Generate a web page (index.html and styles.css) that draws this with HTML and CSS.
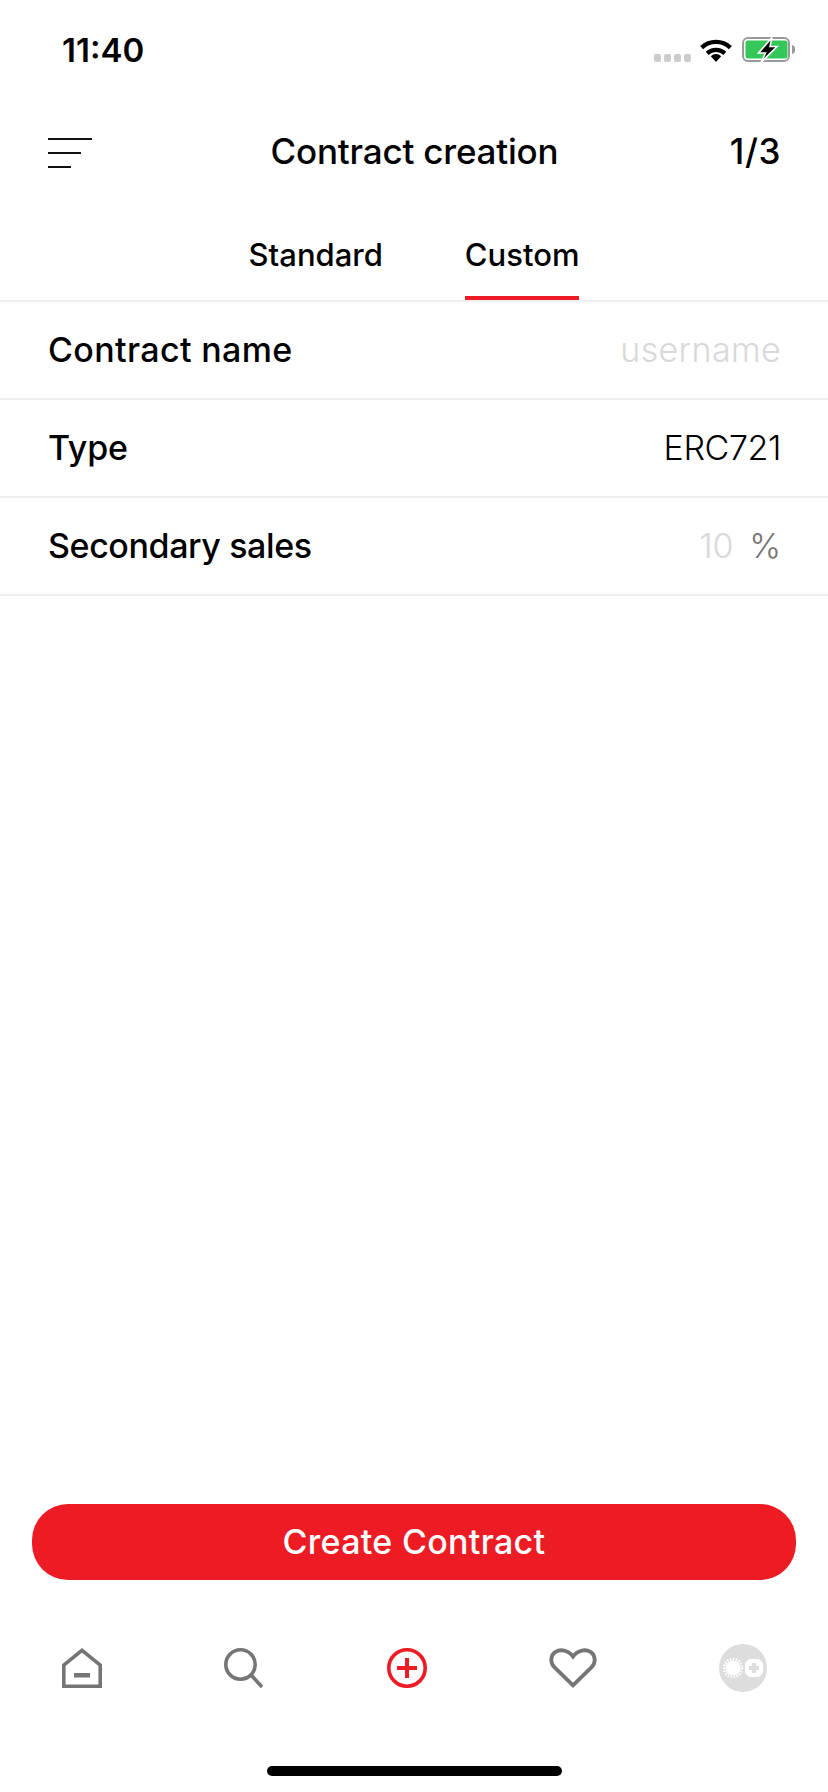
FILE: index.html
```html
<!DOCTYPE html>
<html lang="en">
<head>
<meta charset="utf-8">
<title>Contract creation</title>
<link rel="stylesheet" href="styles.css">
</head>
<body>
<div class="app">
  <div class="status">
    <span class="time">11:40</span>
    <div class="status-icons">
      <div class="dots"><i></i><i></i><i></i><i></i></div>
      <svg class="wifi" width="32" height="24" viewBox="0 0 32 24"><path d="M1.600 9.600A21 21 0 0 1 30.400 9.600" fill="none" stroke="#000" stroke-width="4.400"/><path d="M7.200 15.400A13 13 0 0 1 24.800 15.400" fill="none" stroke="#000" stroke-width="4.200"/><path d="M10.800 18.200A7 7 0 0 1 21.200 18.200L16 24Z" fill="#000"/></svg>
      <svg class="battery" width="53" height="26" viewBox="0 0 53 26"><rect x="1" y="1" width="46" height="23" rx="5" fill="#fff" stroke="#999" stroke-width="2"/><rect x="3.500" y="3.500" width="42" height="18" rx="2.500" fill="#34c759"/><path d="M50 8a4 4 0 0 1 3 4.500a4 4 0 0 1-3 4.500Z" fill="#999"/><path d="M30 .5L16.500 16H23.500L19 25.500L35 9.500H28Z" fill="#000" stroke="#fff" stroke-width="1.600"/></svg>
    </div>
  </div>
  <header class="header">
    <div class="menu"><i class="m1"></i><i class="m2"></i><i class="m3"></i></div>
    <h1 class="title">Contract creation</h1>
    <div class="step">1/3</div>
  </header>
  <nav class="tabs">
    <span class="tab">Standard</span>
    <span class="tab active">Custom</span>
  </nav>
  <div class="row"><span class="label wide">Contract name</span><span class="value ghost wide">username</span></div>
  <div class="row"><span class="label">Type</span><span class="value narrow">ERC721</span></div>
  <div class="row"><span class="label narrow">Secondary sales</span><span class="value"><span class="ghost">10</span><span class="pct">%</span></span></div>
  <div class="spacer"></div>
  <button class="cta">Create Contract</button>
  <div class="nav">
    <svg width="40" height="40" viewBox="0 0 40 40"><path d="M1.800 38.200V17L20 2.300L38.200 17V38.200Z" fill="none" stroke="#757575" stroke-width="3.600"/><rect x="12" y="25" width="16" height="4.500" fill="#757575"/></svg>
    <svg width="40" height="40" viewBox="0 0 40 40"><circle cx="16.500" cy="16.500" r="14.700" fill="none" stroke="#757575" stroke-width="3.600"/><path d="M27.500 27.500L38 39" stroke="#757575" stroke-width="3.600" fill="none"/></svg>
    <svg width="40" height="40" viewBox="0 0 40 40"><circle cx="20" cy="20" r="18.200" fill="none" stroke="#ed1c24" stroke-width="3.600"/><path d="M10 20H30M20 10V30" stroke="#ed1c24" stroke-width="4" fill="none"/></svg>
    <svg width="48" height="40" viewBox="0 0 48 40"><path d="M24 37.300L5.600 19.400C.6 14.500 1.600 7 6.500 3.900C11.500 .9 19 1.800 24 8.500C29 1.800 36.500 .9 41.500 3.900C46.400 7 47.400 14.500 42.400 19.400Z" fill="none" stroke="#757575" stroke-width="3.800"/></svg>
    <svg width="48" height="48" viewBox="0 0 48 48"><circle cx="24" cy="24" r="24" fill="#ddd"/><circle cx="14" cy="24" r="7.500" fill="#fff"/><circle cx="14" cy="24" r="9" fill="none" stroke="#fff" stroke-width="2.500" stroke-dasharray="1.500 1.500"/><path d="M30 15H40L44 19V29L40 33H30L26 29V19Z" fill="#fff"/><path d="M33 19H37V22H40V26H37V29H33V26H30V22H33Z" fill="#ddd"/></svg>
  </div>
  <div class="homebar"></div>
</div>
</body>
</html>
```
FILE: styles.css
```css
* { box-sizing: border-box; }
html, body { margin: 0; padding: 0; background: #fff; }
body { font-family: Inter, "Liberation Sans", sans-serif; color: #000; }
.app { width: 828px; height: 1792px; display: flex; flex-direction: column; overflow: hidden; }

.status { height: 100px; display: flex; align-items: center; justify-content: space-between; padding: 0 33px 0 62px; }
.time { font-size: 33px; font-weight: 600; }
.status-icons { display: flex; align-items: flex-end; height: 25px; }
.dots { display: flex; gap: 3px; margin-right: 9px; margin-bottom: 1px; }
.dots i { width: 7px; height: 8px; border-radius: 2px; background: #ccc; }
.wifi { margin-right: 10px; margin-bottom: 1px; }
.battery { display: block; }

.header { height: 102px; display: grid; grid-template-columns: 1fr auto 1fr; align-items: center; padding: 0 47px 0 48px; }
.menu { display: flex; flex-direction: column; gap: 12px; margin-top: 4px; }
.menu i { display: block; height: 2px; background: #111; }
.m1 { width: 44px; }
.m2 { width: 33px; }
.m3 { width: 23px; }
.title { margin: 0; font-size: 35px; font-weight: 500; letter-spacing: -0.2px; }
.step { justify-self: end; font-size: 35px; font-weight: 500; letter-spacing: 0.6px; }

.tabs { height: 100px; display: flex; justify-content: center; align-items: flex-end; gap: 82px; border-bottom: 2px solid #eee; }
.tab { font-size: 31px; line-height: 40px; font-weight: 500; letter-spacing: 0; padding-bottom: 21px; border-bottom: 4px solid transparent; }
.tab.active { border-bottom-color: #ed1c24; }

.row { height: 98px; display: flex; align-items: center; justify-content: space-between; padding: 0 47px 2px 48px; border-bottom: 2px solid #eee; }
.label { font-size: 34px; font-weight: 500; letter-spacing: -0.2px; }
.value { font-size: 34px; font-weight: 300; letter-spacing: -0.2px; }
.label.wide, .value.wide { letter-spacing: 0.35px; }
.label.narrow, .value.narrow { letter-spacing: -0.4px; }
.ghost { color: #d8d8d8; }
.pct { color: #757575; margin-left: 16px; }

.spacer { flex: 1; }
.cta { flex: none; height: 76px; margin: 0 32px; padding: 0 0 2px; border: 0; border-radius: 36px; background: #ed1c24; color: #fff; font: 500 34px Inter, "Liberation Sans", sans-serif; letter-spacing: 0.3px; }
.nav { flex: none; height: 112px; padding: 64px 61px 0 62px; display: flex; align-items: center; justify-content: space-between; }
.homebar { flex: none; width: 295px; height: 10px; margin: 74px auto 16px; border-radius: 5px; background: #000; }
```
